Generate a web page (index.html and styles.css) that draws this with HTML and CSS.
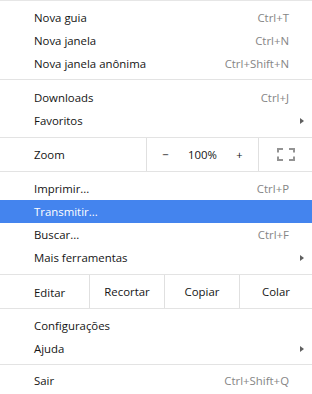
FILE: index.html
```html
<!DOCTYPE html>
<html lang="pt-BR">
<head>
<meta charset="utf-8">
<title>Menu</title>
<link rel="stylesheet" href="styles.css">
</head>
<body>
<div class="menu">
  <div class="group g1">
    <div class="item"><span class="label">Nova guia</span><span class="key">Ctrl+T</span></div>
    <div class="item"><span class="label">Nova janela</span><span class="key">Ctrl+N</span></div>
    <div class="item"><span class="label">Nova janela anônima</span><span class="key">Ctrl+Shift+N</span></div>
  </div>
  <div class="group g2">
    <div class="item"><span class="label">Downloads</span><span class="key">Ctrl+J</span></div>
    <div class="item"><span class="label">Favoritos</span><span class="arrow"></span></div>
  </div>
  <div class="zoom-row">
    <span class="row-label">Zoom</span>
    <div class="zoom-ctrl">
      <span class="zbtn">−</span>
      <span class="zbtn">100%</span>
      <span class="zbtn plus">+</span>
    </div>
    <div class="fs">
      <svg width="18" height="13" viewBox="0 0 18 13"><path d="M1 4.5V1H6M12 1H17V4.5M17 8.5V12H12M6 12H1V8.5" fill="none" stroke="#939393" stroke-width="2"/></svg>
    </div>
  </div>
  <div class="group g4">
    <div class="item"><span class="label">Imprimir...</span><span class="key">Ctrl+P</span></div>
    <div class="item active"><span class="label">Transmitir...</span></div>
    <div class="item"><span class="label">Buscar...</span><span class="key">Ctrl+F</span></div>
    <div class="item"><span class="label">Mais ferramentas</span><span class="arrow"></span></div>
  </div>
  <div class="edit-row">
    <span class="edit-label">Editar</span>
    <span class="ebtn">Recortar</span>
    <span class="ebtn">Copiar</span>
    <span class="ebtn last">Colar</span>
  </div>
  <div class="group g6">
    <div class="item"><span class="label">Configurações</span></div>
    <div class="item"><span class="label">Ajuda</span><span class="arrow"></span></div>
  </div>
  <div class="group g7">
    <div class="item"><span class="label">Sair</span><span class="key">Ctrl+Shift+Q</span></div>
  </div>
</div>
</body>
</html>
```

FILE: styles.css
```css
html, body {
  margin: 0;
  padding: 0;
  background: #ffffff;
}

body {
  font-family: "Open Sans", "Noto Sans", sans-serif;
  font-size: 11.4px;
  color: #141414;
}

.menu {
  width: 312px;
  border-top: 1px solid #e6e6e6;
}

.group {
  border-bottom: 1px solid #e3e3e3;
}

.g1 { padding: 5px 0 4px; }
.g2 { padding: 6px 0 5px; }
.g4 { padding: 5px 0 5px; }
.g6 { padding: 5px 0 4px; }
.g7 { padding: 4px 0 0; border-bottom: none; }

.item {
  height: 23px;
  display: flex;
  align-items: center;
  justify-content: space-between;
  padding: 0 6px 0 34px;
}

.item.active {
  background: #4484ee;
  color: #ffffff;
}

.key {
  color: #858585;
  margin-right: 17px;
}

.arrow {
  width: 0;
  height: 0;
  border-left: 4px solid #606060;
  border-top: 3.5px solid transparent;
  border-bottom: 3.5px solid transparent;
  margin-right: 2px;
}

.zoom-row,
.edit-row {
  height: 33px;
  display: flex;
  align-items: stretch;
  border-bottom: 1px solid #e3e3e3;
}

.row-label {
  width: 146px;
  padding-left: 34px;
  box-sizing: border-box;
  display: flex;
  align-items: center;
}

.zoom-ctrl {
  width: 112px;
  display: flex;
  border-left: 1px solid #e0e0e0;
  box-sizing: border-box;
}

.zbtn {
  flex: 1;
  display: flex;
  align-items: center;
  justify-content: center;
}

.zbtn.plus {
  font-size: 11px;
}

.fs {
  flex: 1;
  display: flex;
  align-items: center;
  justify-content: center;
  border-left: 1px solid #e0e0e0;
}

.edit-label {
  width: 89px;
  padding-left: 34px;
  padding-top: 2px;
  box-sizing: border-box;
  display: flex;
  align-items: center;
}

.ebtn {
  width: 75px;
  box-sizing: border-box;
  display: flex;
  align-items: center;
  justify-content: center;
  border-left: 1px solid #e0e0e0;
}

.ebtn.last {
  width: auto;
  flex: 1;
}
```
